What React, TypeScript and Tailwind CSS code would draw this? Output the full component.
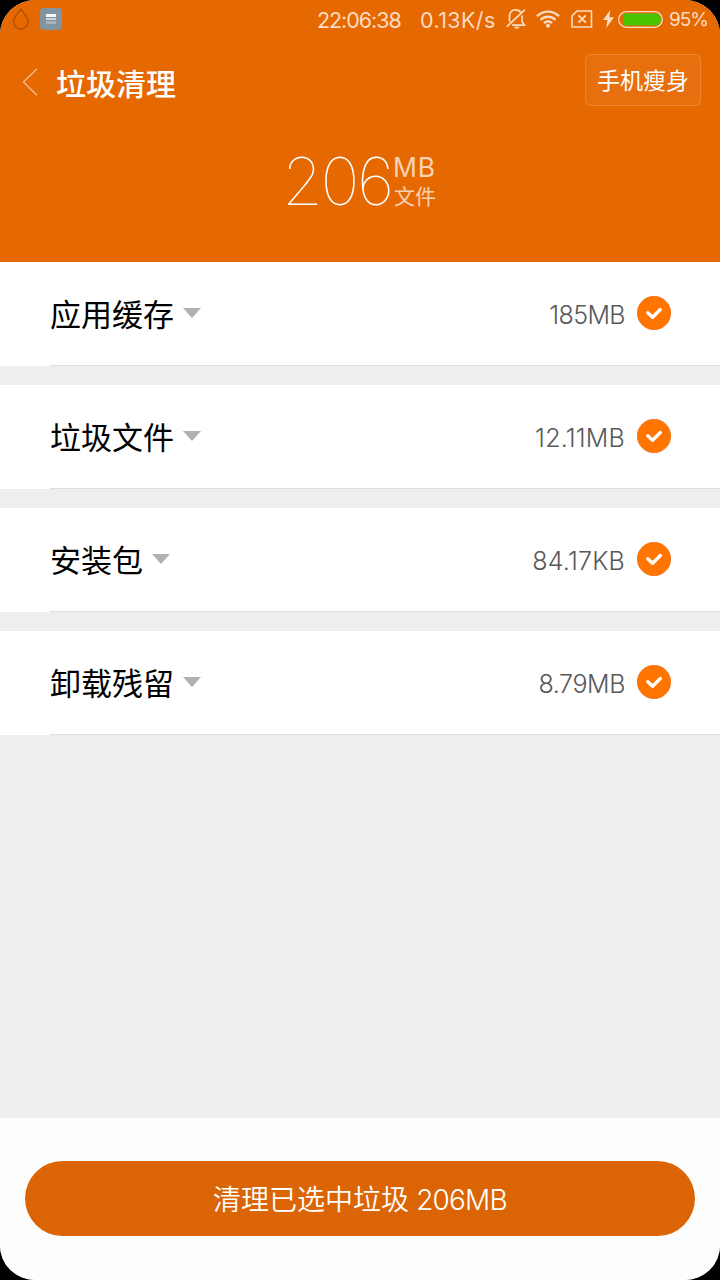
import { useState } from "react";

const JUNK_GROUPS = [
  { name: "应用缓存", size: "185MB", tracking: "tracking-[-0.6px]" },
  { name: "垃圾文件", size: "12.11MB", tracking: "tracking-[0.2px]" },
  { name: "安装包", size: "84.17KB", tracking: "tracking-[0.2px]" },
  { name: "卸载残留", size: "8.79MB", tracking: "tracking-[-0.4px]" },
];

function StatusBar() {
  return (
    <div className="flex h-[38px] items-center text-[#fbdcc2]">
      <svg className="ml-3 h-[22px] w-[18px]" viewBox="0 0 18 22" fill="none" stroke="#a34a00" strokeWidth="1.1">
        <path d="M9 1C6.500 5 1.500 9 1.500 13.700a7.300 7.300 0 0 0 14.600 0C16.100 9 11.300 5 9 1Z" />
      </svg>
      <svg className="ml-[10px] h-[22px] w-[22px]" viewBox="0 0 22 22">
        <rect width="22" height="22" rx="4" fill="#8095a0" />
        <path fill="#f4f7f8" d="M6 6h10v3H6z" />
        <path fill="#ccd5d9" d="M6 10h10v2H6z" />
        <path fill="#a6b5bd" d="M6 13h10v3H6z" />
      </svg>

      <span className="ml-[255px] w-[85px] pt-[2px] text-[21.5px] leading-10 tracking-[-1.05px] whitespace-nowrap">22:06:38</span>
      <span className="ml-[18px] w-[76px] pt-[2px] text-[21.5px] leading-10 tracking-[0.4px] whitespace-nowrap">0.13K/s</span>

      {/* muted bell */}
      <svg className="ml-[10px] h-[22px] w-[20px]" viewBox="0 0 20 22" fill="none" stroke="currentColor" strokeWidth="1.700">
        <path d="M3.500 14V8.500c0-4 2.200-6.700 6-6.700 2.800 0 4.700 1.200 5.600 3M16 7.500v6.200l2.500 3.500H6M18.800 1.800.8 18.600" />
        <path d="M8 18.800h5.400a2.700 2 0 0 1-5.400 0Z" fill="currentColor" stroke="none" />
      </svg>
      <svg className="ml-[10px] h-[20px] w-[24px]" viewBox="0 0 24 20" fill="none" stroke="currentColor" strokeWidth="2.400">
        <path d="M1 7.200c6.300-6.100 15.700-6.100 22 0M4.500 10.900c4.300-4.200 10.700-4.200 15 0M8 14.200c2.300-2.200 5.700-2.200 8 0" />
        <circle cx="12" cy="16.700" r="2" fill="currentColor" stroke="none" />
      </svg>
      {/* no SIM */}
      <svg className="ml-[11px] h-[18px] w-[22px]" viewBox="0 0 22 18" fill="none" stroke="currentColor" strokeWidth="1.600">
        <path d="M6 1h14.500v16H1V6Z" />
        <path strokeWidth="1.900" d="m7.500 5.300 7.300 7.300m0-7.300-7.300 7.300" />
      </svg>
      <svg className="ml-[10px] h-[18px] w-[11px]" viewBox="0 0 11 18" fill="currentColor">
        <path d="M7.300 0 0 10h4.400L3.200 18 11 7.300H6.300Z" />
      </svg>
      <svg className="ml-[4px] h-[17px] w-[45px]" viewBox="0 0 45 17">
        <rect x=".7" y=".7" width="43.600" height="15.600" rx="7.800" fill="none" stroke="currentColor" strokeWidth="1.300" />
        <path fill="#4bc400" d="M5 2.500h33.500c2 0 4.500 3 4.500 6s-2.500 6-4.500 6H5Z" />
      </svg>
      <span className="ml-[6px] pt-[2px] text-[19px] leading-10 tracking-[-1px] whitespace-nowrap">95%</span>
    </div>
  );
}

function CheckBadge({ checked }: { checked: boolean }) {
  return (
    <svg className="h-[34px] w-[34px]" viewBox="0 0 34 34" fill="none">
      <circle cx="17" cy="17" r="16.700" fill={checked ? "#ff7500" : "#fff"} stroke={checked ? "#ec6200" : "#ccc"} strokeWidth=".6" />
      {checked && (
        <path d="m10.800 16.700 4.800 4.500 7.700-7.700" stroke="#fff" strokeWidth="3.400" strokeLinecap="round" strokeLinejoin="round" />
      )}
    </svg>
  );
}

export default function App() {
  const [selected, setSelected] = useState<boolean[]>([true, true, true, true]);

  const toggle = (index: number) => {
    setSelected((prev) => prev.map((value, i) => (i === index ? !value : value)));
  };

  return (
    <div className="h-[1280px] w-[720px] bg-black font-['Inter','Noto_Sans_CJK_SC',sans-serif]">
      <div className="flex h-full flex-col overflow-hidden rounded-[35px] bg-[#eeeeee]">
        <header className="h-[262px] shrink-0 bg-[#e66800] text-white">
          <StatusBar />
          <div className="mt-[2px] flex h-20 items-center pr-[19px] pl-[22px]">
            <svg className="mt-1 h-[28px] w-[16px]" viewBox="0 0 16 28" fill="none" stroke="#f5b787" strokeWidth="1.500">
              <path d="M15 .8 1.500 14 15 27.200" />
            </svg>
            <h1 className="mt-2 ml-[18px] text-[30px] leading-10 font-medium">垃圾清理</h1>
            <button className="ml-auto h-[52px] w-[116px] rounded-[6px] border border-white/15 bg-white/5 text-[23px] leading-[52px]">
              手机瘦身
            </button>
          </div>
          <div className="ml-[282px] flex h-[120px] pt-[22px]">
            <span className="w-[111px] text-[66px] leading-[78px] font-thin tracking-[-2.5px]">206</span>
            <div className="flex flex-col pt-[10px] text-[#f9d2b3]">
              <span className="text-[26.5px] leading-[30px] tracking-[0.7px]">MB</span>
              <span className="pl-px text-[21px] leading-[30px]">文件</span>
            </div>
          </div>
        </header>

        <main className="flex flex-1 flex-col gap-[19px]">
          {JUNK_GROUPS.map((group, i) => (
            <section key={group.name} className="h-[104px] bg-white pl-[50px]">
              <div className="flex h-full items-center border-b border-[#dddddd] pr-[49px]">
                <span className="pt-[2px] text-[31px] leading-[44px] text-black">{group.name}</span>
                <svg className="mb-px ml-[9px] h-[10px] w-[18px]" viewBox="0 0 18 10" fill="#b1b1b1">
                  <path d="M0 0h18L9 10Z" />
                </svg>
                <span className={`ml-auto pt-[3px] text-[25px] leading-10 font-light text-[#585858] ${group.tracking}`}>
                  {group.size}
                </span>
                <button className="mb-[2px] ml-[12px]" onClick={() => toggle(i)}>
                  <CheckBadge checked={selected[i]} />
                </button>
              </div>
            </section>
          ))}
        </main>

        <footer className="h-[162px] shrink-0 bg-[#fdfdfd] px-[25px] pt-[43px]">
          <button className="h-[75px] w-full rounded-full bg-[#db6505] pt-[2px] text-[28px] leading-[75px] font-[350] whitespace-pre text-white">
            清理已选中垃圾<span className="tracking-[-0.8px]"> 206MB</span>
          </button>
        </footer>
      </div>
    </div>
  );
}
